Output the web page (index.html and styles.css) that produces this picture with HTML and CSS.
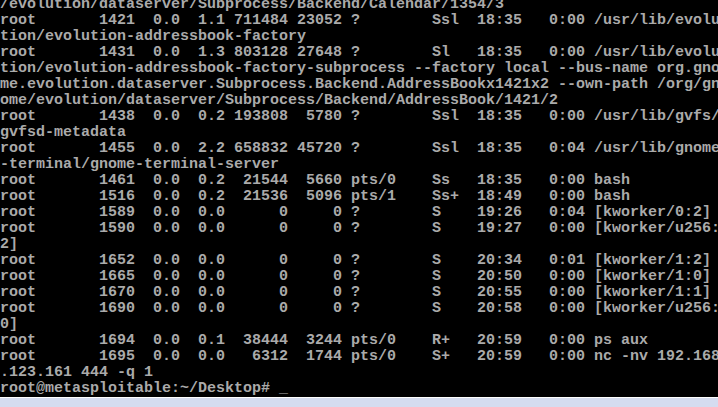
FILE: index.html
```html
<!DOCTYPE html>
<html lang="en">
<head>
  <meta charset="UTF-8">
  <title>tty1</title>
  <link rel="stylesheet" href="styles.css">
</head>
<body>

  <div class="screen">
<pre class="console">/evolution/dataserver/Subprocess/Backend/Calendar/1354/3
root       1421  0.0  1.1 711484 23052 ?        Ssl  18:35   0:00 /usr/lib/evolu
tion/evolution-addressbook-factory
root       1431  0.0  1.3 803128 27648 ?        Sl   18:35   0:00 /usr/lib/evolu
tion/evolution-addressbook-factory-subprocess --factory local --bus-name org.gno
me.evolution.dataserver.Subprocess.Backend.AddressBookx1421x2 --own-path /org/gn
ome/evolution/dataserver/Subprocess/Backend/AddressBook/1421/2
root       1438  0.0  0.2 193808  5780 ?        Ssl  18:35   0:00 /usr/lib/gvfs/
gvfsd-metadata
root       1455  0.0  2.2 658832 45720 ?        Ssl  18:35   0:04 /usr/lib/gnome
-terminal/gnome-terminal-server
root       1461  0.0  0.2  21544  5660 pts/0    Ss   18:35   0:00 bash
root       1516  0.0  0.2  21536  5096 pts/1    Ss+  18:49   0:00 bash
root       1589  0.0  0.0      0     0 ?        S    19:26   0:04 [kworker/0:2]
root       1590  0.0  0.0      0     0 ?        S    19:27   0:00 [kworker/u256:
2]
root       1652  0.0  0.0      0     0 ?        S    20:34   0:01 [kworker/1:2]
root       1665  0.0  0.0      0     0 ?        S    20:50   0:00 [kworker/1:0]
root       1670  0.0  0.0      0     0 ?        S    20:55   0:00 [kworker/1:1]
root       1690  0.0  0.0      0     0 ?        S    20:58   0:00 [kworker/u256:
0]
root       1694  0.0  0.1  38444  3244 pts/0    R+   20:59   0:00 ps aux
root       1695  0.0  0.0   6312  1744 pts/0    S+   20:59   0:00 nc -nv 192.168
.123.161 444 -q 1
root@metasploitable:~/Desktop# _</pre>
  </div>

</body>
</html>
```

FILE: styles.css
```css
body {
  margin: 0;
  background-color: #d5dcf0;
  overflow: hidden;
}

.screen {
  height: 397px;
  background-color: #000;
  border-bottom: 1px solid #fff;
  overflow: hidden;
}

.console {
  margin: -3px 0 0 0;
  font-family: "Liberation Mono", monospace;
  font-size: 15px;
  font-weight: bold;
  line-height: 16px;
  color: #aaaaaa;
  white-space: pre;
}
```
